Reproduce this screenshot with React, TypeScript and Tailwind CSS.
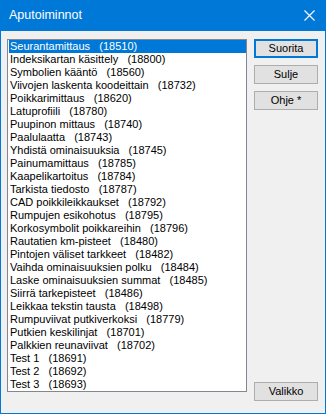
import React from "react";

const items: [string, string][] = [
  ["Seurantamittaus", "18510"],
  ["Indeksikartan käsittely", "18800"],
  ["Symbolien kääntö", "18560"],
  ["Viivojen laskenta koodeittain", "18732"],
  ["Poikkarimittaus", "18620"],
  ["Latuprofiili", "18780"],
  ["Puupinon mittaus", "18740"],
  ["Paalulaatta", "18743"],
  ["Yhdistä ominaisuuksia", "18745"],
  ["Painumamittaus", "18785"],
  ["Kaapelikartoitus", "18784"],
  ["Tarkista tiedosto", "18787"],
  ["CAD poikkileikkaukset", "18792"],
  ["Rumpujen esikohotus", "18795"],
  ["Korkosymbolit poikkareihin", "18796"],
  ["Rautatien km-pisteet", "18480"],
  ["Pintojen väliset tarkkeet", "18482"],
  ["Vaihda ominaisuuksien polku", "18484"],
  ["Laske ominaisuuksien summat", "18485"],
  ["Siirrä tarkepisteet", "18486"],
  ["Leikkaa tekstin tausta", "18498"],
  ["Rumpuviivat putkiverkoksi", "18779"],
  ["Putkien keskilinjat", "18701"],
  ["Palkkien reunaviivat", "18702"],
  ["Test 1", "18691"],
  ["Test 2", "18692"],
  ["Test 3", "18693"],
];

function Btn({ label, primary }: { label: string; primary?: boolean }) {
  return (
    <div
      className={
        "h-[19px] w-[64px] flex items-center justify-center bg-[#E1E1E1] text-[11px] leading-none text-black " +
        (primary ? "border-2 border-[#0078D7]" : "border border-[#ADADAD]")
      }
    >
      {label}
    </div>
  );
}

export default function App() {
  return (
    <div
      className="w-[326px] h-[414px] flex flex-col"
      style={{ fontFamily: '"Liberation Sans", Arial, sans-serif' }}
    >
      <div className="h-[31px] bg-[#0078D7] flex items-center justify-between pl-[9px] pr-[11px] shrink-0">
        <span className="text-white text-[12.5px]">Aputoiminnot</span>
        <svg width="11" height="11" viewBox="0 0 11 11" className="mt-[-1px]">
          <path d="M0.5 0.5 L10.5 10.5 M10.5 0.5 L0.5 10.5" stroke="white" strokeWidth="1.1" />
        </svg>
      </div>
      <div className="flex-1 bg-[#F0F0F0] border-x border-b border-[#0078D7] pl-[6px] pt-[8px] flex gap-[7px]">
        <div className="w-[240px] h-[353px] bg-white border border-[#828790] pl-px">
          {items.map(([name, code], i) => (
            <div
              key={i}
              className={
                "h-[13px] leading-[13px] text-[11px] pl-[1px] whitespace-pre " +
                (i === 0 ? "bg-[#0078D7] text-white" : "text-black")
              }
            >
              {name + "   (" + code + ")"}
            </div>
          ))}
        </div>
        <div className="flex flex-col w-[64px]">
          <Btn label="Suorita" primary />
          <div className="h-[7px]" />
          <Btn label="Sulje" />
          <div className="h-[7px]" />
          <Btn label="Ohje *" />
          <div className="h-[272px]" />
          <Btn label="Valikko" />
        </div>
      </div>
    </div>
  );
}
